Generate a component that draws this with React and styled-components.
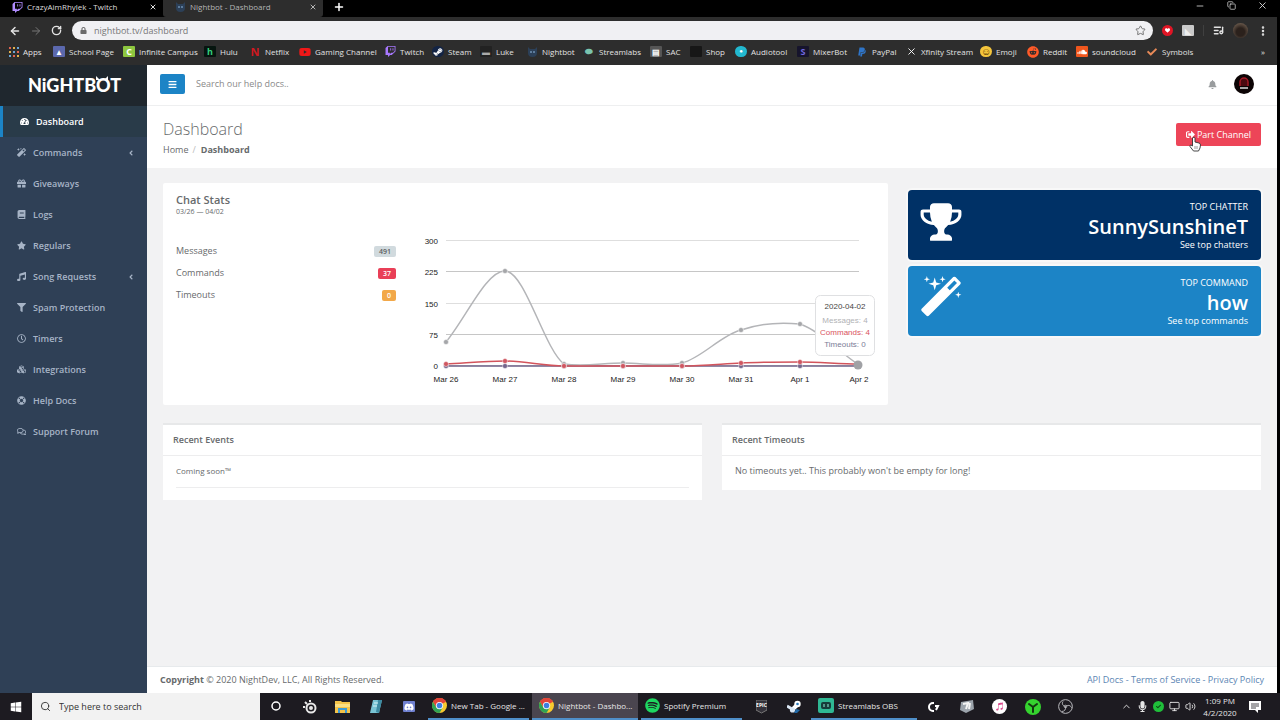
import React from "react";
import styled, { createGlobalStyle, css } from "styled-components";
import {
  FaTwitch, FaSteamSymbol, FaReddit, FaSoundcloud, FaPaypal, FaDiscord, FaWindows, FaBell,
  FaMagic, FaGift, FaBook, FaStar, FaMusic, FaFilter, FaRegClock, FaCubes, FaLifeRing,
  FaRegComments, FaTachometerAlt, FaBars, FaAngleLeft, FaSpotify, FaYoutube, FaCheck,
  FaLock, FaMicrophone, FaSignOutAlt, FaHeart, FaItunesNote, FaCommentAlt,
} from "react-icons/fa";
import {
  ArrowLeft, ArrowRight, RotateCw, Star, X, Plus, Minus, Copy, EllipsisVertical,
  ListMusic, Search, ChevronUp, Monitor, Volume2,
} from "lucide-react";

const ui = `"Open Sans", "Noto Sans", sans-serif`;

const GlobalStyle = createGlobalStyle`
  * { box-sizing: border-box; }
  body { margin: 0; background: #000; font: 9px/14px ${ui}; color: #676a6c; }
  button, input { font: inherit; color: inherit; border: 0; padding: 0; margin: 0; background: none; }
  a { color: inherit; text-decoration: none; }
  h1, h2, p, ul, ol, dl, dd { margin: 0; padding: 0; list-style: none; }
  svg { display: block; flex: none; }
`;

const Screen = styled.div`
  min-height: 100vh;
  display: flex;
  flex-direction: column;
`;

/* ---------- browser chrome ---------- */
const TabStrip = styled.div`
  display: flex;
  height: 17px;
  background: #000;
  color: #d6d6d6;
  font-size: 8px;
`;
const Tab = styled.div`
  display: flex;
  align-items: center;
  gap: 4px;
  width: ${(p) => (p.$active ? 160 : 163)}px;
  height: 17px;
  padding: 0 5px 3px 12px;
  color: ${(p) => (p.$active ? "#b4b4b4" : "#dcdcdc")};
  background: ${(p) => (p.$active ? "#2d2d2d" : "#000")};
  border-radius: 0 0 3px 3px;
`;
const TabTitle = styled.span`
  flex: 1;
  white-space: nowrap;
`;
const PlainButton = styled.button`
  display: grid;
  place-items: center;
  min-width: 10px;
  color: inherit;
`;
const WindowControls = styled.div`
  margin-left: auto;
  display: flex;
  gap: 21px;
  padding: 0 12px 6px 0;
`;
const NewTab = styled(PlainButton)`
  padding: 0 10px 4px;
  color: #fff;
`;
const Toolbar = styled.div`
  display: flex;
  align-items: center;
  margin-right: 3px;
  padding: 4px 8px 0 9px;
  background: #2d2d2d;
  color: #e4e4e4;
`;
const NavButtons = styled.div`
  display: flex;
  gap: 9px;
  width: 63px;
`;
const AddressBar = styled.label`
  display: flex;
  flex: 1;
  align-items: center;
  gap: 7px;
  height: 19px;
  padding: 0 7px 0 8px;
  border-radius: 10px;
  background: #f0f0f3;
  color: #6a6a6a;
`;
const AddressInput = styled.input`
  flex: 1;
  min-width: 0;
  font-size: 9px;
  color: #777;
  outline: 0;
`;
const Extensions = styled.div`
  display: flex;
  align-items: center;
  gap: 9px;
  margin-left: 9px;
`;
const Avatar = styled.span`
  display: grid;
  place-items: center;
  width: ${(p) => p.$size}px;
  height: ${(p) => p.$size}px;
  border-radius: 50%;
  overflow: hidden;
  background: ${(p) => p.$color};
`;
const Bookmarks = styled.nav`
  display: flex;
  align-items: center;
  height: 25px;
  margin-right: 3px;
  padding: 0 9px 2px;
  background: #2d2d2d;
  color: #e2e2e2;
  font-size: 8px;
  white-space: nowrap;
`;
const Bookmark = styled.a`
  display: flex;
  align-items: center;
  gap: 4px;
  flex: 0 0 ${(p) => p.$width}px;
`;
const MoreBookmarks = styled(PlainButton)`
  margin-left: auto;
`;
const IconTile = styled.span`
  display: grid;
  place-items: center;
  width: 12px;
  height: 11px;
  font-size: ${(p) => p.$size || 10}px;
  font-weight: 700;
  line-height: 11px;
  border-radius: ${(p) => (p.$round ? 6 : 1)}px;
  background: ${(p) => p.$bg || "transparent"};
  color: ${(p) => p.$fg || "#fff"};
`;

/* ---------- site ---------- */
const Site = styled.div`
  flex: 1;
  display: flex;
  margin-right: 3px;
`;
const Sidebar = styled.aside`
  flex: 0 0 147px;
  background: #2f4056;
`;
const Brand = styled.a`
  position: relative;
  display: block;
  height: 41px;
  padding-left: 28px;
  background: #1f272e;
  color: #fff;
  font: 900 18px/41px Lato, "Open Sans", sans-serif;
`;
const Ears = styled.svg`
  position: absolute;
  left: 94px;
  top: 10px;
`;
const MenuLink = styled.a`
  display: flex;
  align-items: center;
  gap: 6px;
  height: 31px;
  padding: 0 12px 0 16px;
  font-weight: 600;
  color: #a7b4c6;
  ${(p) => p.$active && css`
    border-left: 3px solid #1c84c6;
    background: #293b49;
    color: #fff;
  `}
`;
const MenuIcon = styled.span`
  display: grid;
  place-items: center;
  width: 11px;
`;
const MenuText = styled.span`
  flex: 1;
`;
const Page = styled.div`
  flex: 1;
  min-width: 0;
  display: flex;
  flex-direction: column;
  background: #f2f2f3;
`;
const TopBar = styled.header`
  display: flex;
  align-items: center;
  height: 41px;
  padding: 0 23px 2px 13px;
  gap: 11px;
  background: #fff;
  border-bottom: 1px solid #eeeff0;
`;
const MenuToggle = styled.button`
  display: grid;
  place-items: center;
  width: 25px;
  height: 20px;
  border-radius: 2px;
  background: #1c84c6;
  color: #fff;
`;
const DocsSearch = styled.input`
  flex: 1;
  outline: 0;
  font-size: 9px;
  line-height: 16px;
  &::placeholder { color: #8a8a8a; opacity: 1; }
`;
const BellButton = styled(PlainButton)`
  margin-right: 6px;
  color: #999c9e;
`;
const Heading = styled.section`
  display: flex;
  justify-content: space-between;
  align-items: flex-start;
  padding: 11px 16px;
  background: #fff;
`;
const Title = styled.h1`
  font-size: 16px;
  font-weight: 300;
  line-height: 24px;
  color: #676a6c;
`;
const Crumbs = styled.ol`
  display: flex;
  gap: 4px;
  padding-top: 2px;
  line-height: 14px;
`;
const Crumb = styled.li`
  font-weight: ${(p) => (p.$current ? 700 : 400)};
  &:not(:first-child)::before {
    content: "/";
    padding-right: 5px;
    font-weight: 400;
    color: #bbb;
  }
`;
const PartButton = styled.button`
  position: relative;
  display: flex;
  align-items: center;
  justify-content: center;
  gap: 2px;
  width: 85px;
  height: 23px;
  margin-top: 6px;
  border-radius: 2px;
  background: #ed4558;
  color: #fff;
`;
const Pointer = styled.svg`
  position: absolute;
  left: 13px;
  top: 13px;
`;
const Content = styled.main`
  flex: 1;
  padding: 15px 16px;
`;
const Row = styled.div`
  display: grid;
  grid-template-columns: ${(p) => p.$cols};
  column-gap: 20px;
  align-items: start;
  margin-bottom: 18px;
`;
const StatsCard = styled.section`
  padding: 10px 13px 13px;
  background: #fff;
  border-radius: 2px;
`;
const CardTitle = styled.h2`
  font-size: 11px;
  font-weight: 600;
  line-height: 14px;
`;
const Small = styled.p`
  font-size: 7px;
  line-height: 10px;
`;
const StatsBody = styled.div`
  display: grid;
  grid-template-columns: 220fr 460fr;
  column-gap: 19px;
  padding-top: 13px;
`;
const StatList = styled.dl`
  padding-top: 10px;
`;
const Stat = styled.div`
  display: flex;
  justify-content: space-between;
  align-items: center;
  height: 22px;
`;
const Badge = styled.dd`
  padding: 0 5px;
  border-radius: 2px;
  font-size: 7px;
  font-weight: 600;
  line-height: 11px;
  background: ${(p) => p.$bg};
  color: ${(p) => p.$fg};
`;
const Chart = styled.svg`
  width: 100%;
  height: auto;
  font: 8px "Liberation Sans", sans-serif;
`;
const Tiles = styled.div`
  display: grid;
  gap: 6px;
  padding-top: 7px;
`;
const Tile = styled.article`
  display: flex;
  justify-content: space-between;
  min-height: 70px;
  padding: 10px 13px 10px 11px;
  border-radius: 4px;
  background: ${(p) => p.$bg};
  box-shadow: 0 0 0 2px #f8f8f8;
  color: #fff;
  text-align: right;
`;
const TileName = styled.h2`
  font-size: 20px;
  font-weight: 600;
  line-height: 26px;
`;
const TileLink = styled.a`
  display: block;
  line-height: 10px;
`;
const Panel = styled.section`
  background: #fff;
  border-top: 2px solid #e7e8e9;
`;
const PanelTitle = styled.h2`
  padding: 7px 10px 8px;
  border-bottom: 1px solid #ededee;
  font-size: 9px;
  font-weight: 600;
  line-height: 15px;
`;
const PanelBody = styled.div`
  padding: 8px 13px 12px;
`;
const EventItem = styled.p`
  padding-bottom: 9px;
  border-bottom: 1px solid #ededee;
  font-size: 8px;
  line-height: 14px;
`;
const Footer = styled.footer`
  display: flex;
  justify-content: space-between;
  padding: 6px 13px 6px;
  background: #fff;
  border-top: 1px solid #e7eaec;
`;
const FooterLinks = styled.nav`
  color: #5c86b4;
`;

/* ---------- taskbar ---------- */
const Taskbar = styled.footer`
  display: flex;
  height: 27px;
  background: #1d1b21;
  color: #e6e6e6;
`;
const Start = styled(PlainButton)`
  width: 32px;
  color: #fff;
`;
const TaskSearch = styled.label`
  display: flex;
  align-items: center;
  gap: 8px;
  width: 228px;
  padding-left: 8px;
  background: #f2f2f2;
  color: #333;
`;
const TaskSearchInput = styled.input`
  width: 150px;
  font-size: 9px;
  outline: 0;
  &::placeholder { color: #333; opacity: 1; }
`;
const Slot = styled.button`
  display: grid;
  place-items: center;
  width: ${(p) => p.$width || 33}px;
  color: #fff;
`;
const TaskButton = styled.button`
  display: flex;
  align-items: center;
  gap: 4px;
  width: ${(p) => (p.$wide ? 106 : 101)}px;
  margin-left: 3px;
  padding-left: ${(p) => (p.$wide ? 7 : 4)}px;
  border-bottom: 2px solid #4f8fc9;
  background: ${(p) => (p.$active ? "#4a454f" : "transparent")};
  color: #e6e6e6;
  font-size: 8px;
  white-space: nowrap;
`;
const Tray = styled.div`
  display: flex;
  align-items: center;
  gap: 5px;
  margin-left: auto;
  padding-right: 19px;
`;
const Clock = styled.time`
  width: 38px;
  margin-right: 5px;
  font-size: 8px;
  line-height: 12px;
  text-align: center;
`;

const Icon = {
  apps: (
    <svg width="10" height="10">
      {[0, 4, 8].flatMap((x, i) => [0, 4, 8].map((y, j) => (
        <rect key={`${x}${y}`} x={x} y={y} width="2" height="2" fill={["#e06450", "#e3b04b", "#6aa6d8"][(i + j) % 3]} />
      )))}
    </svg>
  ),
  chrome: (
    <svg width="15" height="15" viewBox="0 0 24 24">
      <circle cx="12" cy="12" r="12" fill="#f7c92e" />
      <path d="M12 12 1.6 6A12 12 0 0 1 22.4 6Z" fill="#e2453a" />
      <path d="M12 6H22.4A12 12 0 0 0 1.6 6L6.8 15Z" fill="#e2453a" />
      <path d="M1.6 6A12 12 0 0 0 12 24l5.2-9H6.8Z" fill="#31a354" />
      <circle cx="12" cy="12" r="5.8" fill="#fff" />
      <circle cx="12" cy="12" r="4.5" fill="#3f7fe0" />
    </svg>
  ),
  folder: (
    <svg width="15" height="13" viewBox="0 0 15 13">
      <path d="M0 1h6l1 1h8v11H0z" fill="#f3c349" /><path d="M0 4h15v3H0z" fill="#fadf82" />
      <path d="M3 13V8h9v5h-2v-3H5v3z" fill="#3e9bd4" />
    </svg>
  ),
  obs: (
    <svg width="15" height="15" viewBox="0 0 24 24" fill="none" stroke="#b9b9bd" strokeWidth="1.6">
      <circle cx="12" cy="12" r="11" /><path d="M12 12c-5-1-6-5-4-8M12 12c4-3 8-2 10 2M12 12c1 5-2 8-6 8" />
      <circle cx="12" cy="12" r="2" />
    </svg>
  ),
  steelseries: (
    <svg width="15" height="14" viewBox="0 0 15 14" fill="none" stroke="#e8e8e8" strokeWidth="2">
      <circle cx="9" cy="8" r="4.5" /><circle cx="9" cy="8" r="1" />
      <path d="M1 7h2M3 2l2 2M8 0v2" />
    </svg>
  ),
  notepad: (
    <svg width="14" height="14" viewBox="0 0 14 14">
      <path d="M4 0h9l-3 13H1z" fill="#79c4d4" /><path d="M9 0h4l-3 13-3-1z" fill="#3d8ba2" />
      <path d="M5 3h4M4 6h4" stroke="#d9f2f6" />
    </svg>
  ),
  razer: (
    <svg width="16" height="16" viewBox="0 0 16 16">
      <circle cx="8" cy="8" r="8" fill="#35d32f" />
      <path d="M8 8 4 5M8 8l4-3M8 8v5" stroke="#12380f" strokeWidth="2" strokeLinecap="round" />
    </svg>
  ),
  epic: (
    <svg width="11" height="14" viewBox="0 0 11 14">
      <path d="M0 0h11v10l-5.5 3L0 10z" fill="#34323a" stroke="#777" />
      <text x="5.5" y="7" fontSize="5" fontWeight="700" fill="#fff" textAnchor="middle">EPIC</text>
    </svg>
  ),
  streamlabs: (
    <svg width="16" height="15" viewBox="0 0 16 15">
      <rect width="16" height="15" rx="2" fill="#2fb894" />
      <rect x="3" y="4" width="10" height="7" rx="2" fill="#163b3a" /><path d="M6 6v3M10 6v3" stroke="#8df0d5" />
    </svg>
  ),
  logitech: (
    <svg width="12" height="12" viewBox="0 0 12 12" fill="none" stroke="#fff" strokeWidth="2">
      <path d="M6 2H5a4 4 0 0 0 0 8h1M7 5h3l-2 4" />
    </svg>
  ),
  elgato: (
    <svg width="15" height="13" viewBox="0 0 15 13">
      <path d="M2 2l12-2 1 9-8 4-6-3z" fill="#9ca4ac" /><path d="M4 4l5-1-2 6M11 3l-1 6" stroke="#f4f4f4" strokeWidth="2" fill="none" />
    </svg>
  ),
  steam: (
    <svg width="14" height="14" viewBox="0 0 14 14">
      <path d="M6 9l5-5" stroke="#fff" strokeWidth="4" />
      <circle cx="10.5" cy="4" r="3.2" fill="#fff" /><circle cx="10.500" cy="4" r="1.3" fill="#2d79b8" />
      <circle cx="5.5" cy="10" r="2.6" fill="#dbe8f5" /><path d="M0 6l5 3" stroke="#dbe8f5" strokeWidth="3" />
      <path d="M9 9l4 1-3 3H7z" fill="#2168a6" />
    </svg>
  ),
  notifications: (
    <svg width="12" height="12" viewBox="0 0 12 12">
      <path d="M0 0h12v9H9v3L6 9H0z" fill="#fff" /><path d="M2 3h8M2 5h8M2 7h5" stroke="#1d1b21" strokeWidth="0.8" />
    </svg>
  ),
  bot: (
    <svg width="11" height="10" viewBox="0 0 11 10">
      <path d="M1 0l2 2h5l2-2v6q0 4-4.5 4T1 6z" fill="#2c4058" /><path d="M3 5h2M6 5h2" stroke="#8fb8df" />
    </svg>
  ),
};

const bookmarks = [
  ["Apps", 44, Icon.apps],
  ["School Page", 70, <IconTile $bg="#5b68ad" $size={8}>▲</IconTile>],
  ["Infinite Campus", 81, <IconTile $bg="#8dc63f" $size={9}>C</IconTile>],
  ["Hulu", 45, <IconTile $bg="#06150f" $fg="#34d17d" $size={9}>h</IconTile>],
  ["Netflix", 50, <IconTile $fg="#d01820" $size={11}>N</IconTile>],
  ["Gaming Channel", 85, <IconTile $fg="#f01818"><FaYoutube size={12} /></IconTile>],
  ["Twitch", 48, <IconTile $fg="#a878ff"><FaTwitch size={11} /></IconTile>],
  ["Steam", 48, <IconTile $bg="#132445" $round><FaSteamSymbol size={10} /></IconTile>],
  ["Luke", 46, <IconTile $bg="#222" $fg="#aaa" $size={8}>▬</IconTile>],
  ["Nightbot", 57, <IconTile>{Icon.bot}</IconTile>],
  ["Streamlabs", 67, <IconTile $fg="#7ac4ae" $size={9}>⬬</IconTile>],
  ["SAC", 40, <IconTile $bg="#555" $size={8}>▤</IconTile>],
  ["Shop", 45, <IconTile $bg="#171717" />],
  ["Audiotool", 62, <IconTile $bg="#22b8cf" $round $size={6}>●</IconTile>],
  ["MixerBot", 59, <IconTile $bg="#16142c" $fg="#7068e0" $size={9}>S</IconTile>],
  ["PayPal", 49, <IconTile $fg="#2f75c8"><FaPaypal size={10} /></IconTile>],
  ["Xfinity Stream", 75, <IconTile><X size={11} /></IconTile>],
  ["Emoji", 47, <IconTile $bg="#f4c53c" $fg="#5b3a00" $round $size={10}>☺</IconTile>],
  ["Reddit", 49, <IconTile $fg="#ff5a28"><FaReddit size={12} /></IconTile>],
  ["soundcloud", 70, <IconTile $bg="#f0561d"><FaSoundcloud size={10} /></IconTile>],
  ["Symbols", 50, <IconTile $fg="#e88a58"><FaCheck size={10} /></IconTile>],
];

const menu = [
  ["Dashboard", FaTachometerAlt], ["Commands", FaMagic, true], ["Giveaways", FaGift],
  ["Logs", FaBook], ["Regulars", FaStar], ["Song Requests", FaMusic, true],
  ["Spam Protection", FaFilter], ["Timers", FaRegClock], ["Integrations", FaCubes],
  ["Help Docs", FaLifeRing], ["Support Forum", FaRegComments],
];

const days = ["Mar 26", "Mar 27", "Mar 28", "Mar 29", "Mar 30", "Mar 31", "Apr 1", "Apr 2"];
const dayX = (i) => 31 + i * 59;
const messagesY = [112, 41, 134, 133, 133, 100, 94, 135];
const commandsY = [134, 131, 136, 136, 136, 133, 132, 134];

function Dots({ ys, color }) {
  return ys.map((y, i) => <circle key={i} cx={dayX(i)} cy={y} r="2.5" fill={color} stroke="#fff" strokeWidth="0.5" />);
}

function ChatChart() {
  return (
    <Chart viewBox="0 0 460 162" role="img" aria-label="Chat stats by day">
      {[300, 225, 150, 75, 0].map((v, i) => (
        <g key={v}>
          <path d={`M31 ${10 + i * 31 + (i > 1 ? 1 : 0)}.5H444`} stroke={i % 2 ? "#c6c6c6" : "#dedede"} />
          <text x="23" y={14 + i * 31 + (i > 1 ? 1 : 0)} textAnchor="end" fill="#222">{v}</text>
        </g>
      ))}
      {days.map((d, i) => <text key={d} x={dayX(i)} y="152" textAnchor="middle" fill="#222">{d}</text>)}
      <path d="M31 136H444" stroke="#6d5f86" strokeWidth="1.5" />
      <path d="M31 112C51 88 71 41 90 41C110 41 129 119 149 134C169 137 188 133 208 133C228 133 247 137 267 133C287 128 306 105 326 100C346 93 365 92 385 94C405 101 424 122 444 135" fill="none" stroke="#b4b5b8" strokeWidth="1.5" />
      <path d="M31 134C51 133 70 131 90 131C110 131 129 136 149 136H267C287 136 306 134 326 133C346 132 365 132 385 132C405 132 424 134 444 134" fill="none" stroke="#d3545c" strokeWidth="1.5" />
      <Dots ys={messagesY} color="#a5a6a9" />
      <Dots ys={days.map(() => 136)} color="#75668c" />
      <Dots ys={commandsY} color="#cf5660" />
      <circle cx="443" cy="135" r="4.5" fill="#a0a1a5" />
      <rect x="400.5" y="65.5" width="59" height="60" rx="5" fill="#fff" fillOpacity="0.96" stroke="#dfe0e2" />
      <g textAnchor="middle">
        <text x="430" y="79" fill="#444">2020-04-02</text>
        <text x="430" y="93" fill="#b1b2b5">Messages: 4</text>
        <text x="430" y="105" fill="#d9535d">Commands: 4</text>
        <text x="430" y="117" fill="#7b7c97">Timeouts: 0</text>
      </g>
    </Chart>
  );
}

const Trophy = () => (
  <svg width="44" height="44" viewBox="0 0 1792 1792" fill="#fff">
    <path d="M522 883q-74-162-74-371h-256v96q0 78 94.500 162t235.500 113zm1078-275v-96h-256q0 209-74 371 141-29 235.500-113t94.500-162zm128-128v128q0 71-41.500 143t-112 130-173 97.500-215.500 44.500q-42 54-95 95-38 34-52.500 72.500t-14.500 89.500q0 54 30.500 91t97.500 37q75 0 133.500 45.500t58.500 114.500v64q0 14-9 23t-23 9h-832q-14 0-23-9t-9-23v-64q0-69 58.500-114.500t133.500-45.500q67 0 97.500-37t30.500-91q0-51-14.500-89.500t-52.500-72.500q-53-41-95-95-113-5-215.500-44.500t-173-97.500-112-130-41.500-143v-128q0-40 28-68t68-28h288v-96q0-66 47-113t113-47h576q66 0 113 47t47 113v96h288q40 0 68 28t28 68z" />
  </svg>
);
const Wand = () => (
  <svg width="44" height="44" viewBox="0 0 1792 1792" fill="#fff">
    <path d="M1254 581l293-293-107-107-293 293zm447-293q0 27-18 45l-1286 1286q-18 18-45 18t-45-18l-198-198q-18-18-18-45t18-45l1286-1286q18-18 45-18t45 18l198 198q18 18 18 45zm-1351-190l98 30-98 30-30 98-30-98-98-30 98-30 30-98zm350 162l196 60-196 60-60 196-60-196-196-60 196-60 60-196zm930 478l98 30-98 30-30 98-30-98-98-30 98-30 30-98zm-640-640l98 30-98 30-30 98-30-98-98-30 98-30 30-98z" />
  </svg>
);

export default function App() {
  return (
    <Screen>
      <GlobalStyle />
      <TabStrip>
        <Tab>
          <FaTwitch size={11} color="#b18cff" />
          <TabTitle>CrazyAimRhylek - Twitch</TabTitle>
          <PlainButton aria-label="Close tab"><X size={8} strokeWidth={3} /></PlainButton>
        </Tab>
        <Tab $active>
          {Icon.bot}
          <TabTitle>Nightbot - Dashboard</TabTitle>
          <PlainButton aria-label="Close tab"><X size={8} strokeWidth={3} /></PlainButton>
        </Tab>
        <NewTab aria-label="New tab"><Plus size={12} strokeWidth={3} /></NewTab>
        <WindowControls>
          <PlainButton aria-label="Minimize"><Minus size={10} /></PlainButton>
          <PlainButton aria-label="Restore"><Copy size={9} /></PlainButton>
          <PlainButton aria-label="Close"><X size={11} /></PlainButton>
        </WindowControls>
      </TabStrip>
      <Toolbar>
        <NavButtons>
          <PlainButton aria-label="Back"><ArrowLeft size={12} strokeWidth={3} /></PlainButton>
          <PlainButton aria-label="Forward"><ArrowRight size={12} color="#777" /></PlainButton>
          <PlainButton aria-label="Reload"><RotateCw size={11} strokeWidth={3} /></PlainButton>
        </NavButtons>
        <AddressBar>
          <FaLock size={7} />
          <AddressInput aria-label="Address" defaultValue="nightbot.tv/dashboard" />
          <Star size={11} />
        </AddressBar>
        <Extensions>
          <Avatar $size={11} $color="#e01525"><FaHeart size={5} color="#fff" /></Avatar>
          <IconTile $bg="#c9c9c9" $fg="#eee" $size={8}>◣</IconTile>
          <svg width="1" height="11"><path d="M0 0v11" stroke="#555" /></svg>
          <ListMusic size={11} strokeWidth={3} />
          <Avatar $size={15} $color="radial-gradient(circle at 50% 60%, #2b211c 35%, #8b7765)" />
          <PlainButton aria-label="Menu"><EllipsisVertical size={12} strokeWidth={3} /></PlainButton>
        </Extensions>
      </Toolbar>
      <Bookmarks>
        {bookmarks.map(([label, width, icon]) => (
          <Bookmark key={label} href="#" $width={width}>{icon}{label}</Bookmark>
        ))}
        <MoreBookmarks>»</MoreBookmarks>
      </Bookmarks>

      <Site>
        <Sidebar>
          <Brand href="#">
            NiGHTBOT
            <Ears width="16" height="9" viewBox="0 0 16 9" fill="#fff"><path d="M2 1l4 4H2zM14 1l-4 4h4z" /></Ears>
          </Brand>
          <nav>
            {menu.map(([label, Glyph, nested], i) => (
              <MenuLink key={label} href="#" $active={i === 0}>
                <MenuIcon><Glyph size={9} /></MenuIcon>
                <MenuText>{label}</MenuText>
                {nested && <FaAngleLeft size={8} />}
              </MenuLink>
            ))}
          </nav>
        </Sidebar>
        <Page>
          <TopBar>
            <MenuToggle aria-label="Toggle menu"><FaBars size={9} /></MenuToggle>
            <DocsSearch aria-label="Search our help docs" placeholder="Search our help docs.." />
            <BellButton aria-label="Notifications"><FaBell size={9} /></BellButton>
            <Avatar $size={20} $color="#0c0405">
              <svg width="14" height="14" viewBox="0 0 14 14">
                <path d="M3 9V5a4 4 0 0 1 8 0v4" fill="#4b0a10" stroke="#a51925" strokeWidth="1.5" />
                <path d="M3 11h8" stroke="#ddd" strokeWidth="1.5" />
              </svg>
            </Avatar>
          </TopBar>
          <Heading>
            <div>
              <Title>Dashboard</Title>
              <Crumbs>
                <Crumb><a href="#">Home</a></Crumb>
                <Crumb $current>Dashboard</Crumb>
              </Crumbs>
            </div>
            <PartButton>
              <FaSignOutAlt size={9} />
              Part Channel
              <Pointer width="12" height="16" viewBox="0 0 12 16">
                <path d="M4 1.5q1.5-1 2 .5v4l4 1q1.5.5 1.5 2l-.5 3-1.5 3H4.5L1 10.5q-.5-1.5 1-1.5l1.5 1V2z" fill="#fff" stroke="#333" strokeWidth="0.9" />
                <path d="M6 10v3M8 10v3" stroke="#555" strokeWidth="0.6" />
              </Pointer>
            </PartButton>
          </Heading>
          <Content>
            <Row $cols="725fr 353fr">
              <StatsCard>
                <CardTitle>Chat Stats</CardTitle>
                <Small>03/26 — 04/02</Small>
                <StatsBody>
                  <StatList>
                    <Stat><dt>Messages</dt><Badge $bg="#d1dade" $fg="#5e5e5e">491</Badge></Stat>
                    <Stat><dt>Commands</dt><Badge $bg="#e93f57" $fg="#fff">37</Badge></Stat>
                    <Stat><dt>Timeouts</dt><Badge $bg="#f2a849" $fg="#fff">0</Badge></Stat>
                  </StatList>
                  <ChatChart />
                </StatsBody>
              </StatsCard>
              <Tiles>
                <Tile $bg="#003166">
                  <Trophy />
                  <div>
                    <p>TOP CHATTER</p>
                    <TileName>SunnySunshineT</TileName>
                    <TileLink href="#">See top chatters</TileLink>
                  </div>
                </Tile>
                <Tile $bg="#1c84c6">
                  <Wand />
                  <div>
                    <p>TOP COMMAND</p>
                    <TileName>how</TileName>
                    <TileLink href="#">See top commands</TileLink>
                  </div>
                </Tile>
              </Tiles>
            </Row>
            <Row $cols="1fr 1fr">
              <Panel>
                <PanelTitle>Recent Events</PanelTitle>
                <PanelBody><EventItem>Coming soon™</EventItem></PanelBody>
              </Panel>
              <Panel>
                <PanelTitle>Recent Timeouts</PanelTitle>
                <PanelBody><p>No timeouts yet.. This probably won't be empty for long!</p></PanelBody>
              </Panel>
            </Row>
          </Content>
          <Footer>
            <p><b>Copyright</b> © 2020 NightDev, LLC, All Rights Reserved.</p>
            <FooterLinks>
              <a href="#">API Docs</a> - <a href="#">Terms of Service</a> - <a href="#">Privacy Policy</a>
            </FooterLinks>
          </Footer>
        </Page>
      </Site>

      <Taskbar>
        <Start aria-label="Start"><FaWindows size={12} /></Start>
        <TaskSearch>
          <Search size={11} />
          <TaskSearchInput aria-label="Search Windows" placeholder="Type here to search" />
        </TaskSearch>
        <Slot aria-label="Cortana"><svg width="11" height="11"><circle cx="5" cy="5" r="4" fill="none" stroke="#fff" strokeWidth="1.5" /></svg></Slot>
        <Slot aria-label="SteelSeries">{Icon.steelseries}</Slot>
        <Slot aria-label="File Explorer">{Icon.folder}</Slot>
        <Slot aria-label="Notepad">{Icon.notepad}</Slot>
        <Slot aria-label="Discord"><IconTile $bg="#6f80d0"><FaDiscord size={10} /></IconTile></Slot>
        <TaskButton>{Icon.chrome}New Tab - Google ...</TaskButton>
        <TaskButton $active $wide>{Icon.chrome}Nightbot - Dashbo...</TaskButton>
        <TaskButton><FaSpotify size={15} color="#1ed760" />Spotify Premium</TaskButton>
        <Slot aria-label="Epic Games" $width={38}>{Icon.epic}</Slot>
        <Slot aria-label="Steam" $width={28}>{Icon.steam}</Slot>
        <TaskButton $wide>{Icon.streamlabs}Streamlabs OBS</TaskButton>
        <Slot aria-label="Logitech G">{Icon.logitech}</Slot>
        <Slot aria-label="Elgato">{Icon.elgato}</Slot>
        <Slot aria-label="iTunes"><Avatar $size={15} $color="#fff"><FaItunesNote size={9} color="#d94a8c" /></Avatar></Slot>
        <Slot aria-label="Razer">{Icon.razer}</Slot>
        <Slot aria-label="OBS">{Icon.obs}</Slot>
        <Tray>
          <ChevronUp size={11} />
          <FaMicrophone size={11} />
          <Avatar $size={11} $color="#1fbf3a"><FaCheck size={5} color="#0b4815" /></Avatar>
          <Monitor size={11} />
          <Volume2 size={11} />
          <Clock>1:09 PM<br />4/2/2020</Clock>
          {Icon.notifications}
        </Tray>
      </Taskbar>
    </Screen>
  );
}
